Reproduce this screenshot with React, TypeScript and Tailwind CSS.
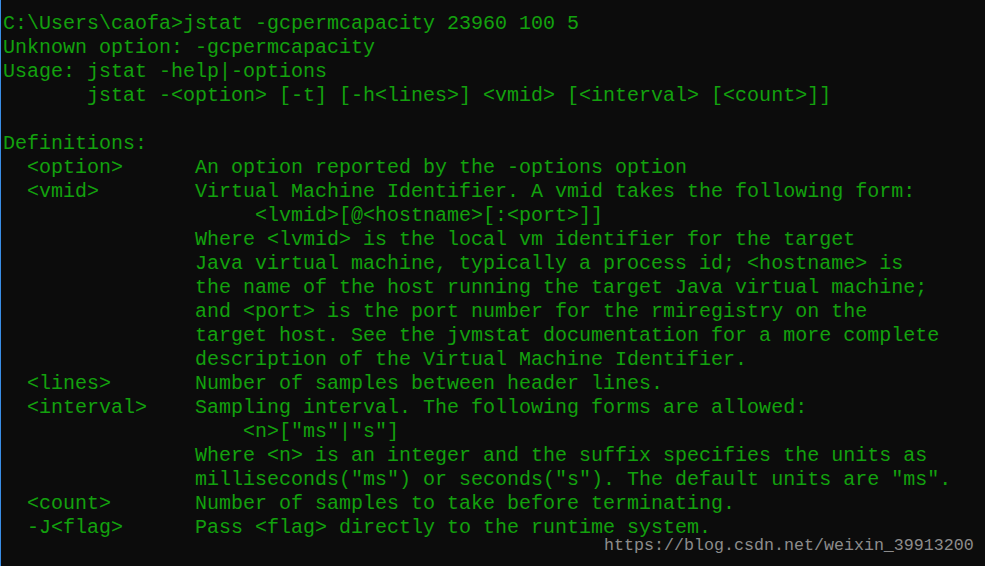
const lines = [
  "C:\\Users\\caofa>jstat -gcpermcapacity 23960 100 5",
  "Unknown option: -gcpermcapacity",
  "Usage: jstat -help|-options",
  "       jstat -<option> [-t] [-h<lines>] <vmid> [<interval> [<count>]]",
  "",
  "Definitions:",
  "  <option>      An option reported by the -options option",
  "  <vmid>        Virtual Machine Identifier. A vmid takes the following form:",
  "                     <lvmid>[@<hostname>[:<port>]]",
  "                Where <lvmid> is the local vm identifier for the target",
  "                Java virtual machine, typically a process id; <hostname> is",
  "                the name of the host running the target Java virtual machine;",
  "                and <port> is the port number for the rmiregistry on the",
  "                target host. See the jvmstat documentation for a more complete",
  "                description of the Virtual Machine Identifier.",
  "  <lines>       Number of samples between header lines.",
  "  <interval>    Sampling interval. The following forms are allowed:",
  "                    <n>[\"ms\"|\"s\"]",
  "                Where <n> is an integer and the suffix specifies the units as",
  "                milliseconds(\"ms\") or seconds(\"s\"). The default units are \"ms\".",
  "  <count>       Number of samples to take before terminating.",
  "  -J<flag>      Pass <flag> directly to the runtime system.",
  "",
  "C:\\Users\\caofa>",
];

const App = () => {
  return (
    <div className="relative h-[566px] w-[985px] overflow-hidden border-l border-[#3a8ee6] bg-[#0c0c0c]">
      <pre className="m-0 pl-[2px] pt-[12px] font-['Liberation_Mono',monospace] text-[20px] leading-[24px] text-[#13a10e] whitespace-pre">
        {lines.map((line, i) => (
          <div key={i} className="h-[24px]">
            {line}
          </div>
        ))}
      </pre>

      {/* CSDN watermark */}
      <div className="absolute left-[603px] top-[536px] font-['Liberation_Mono',monospace] text-[16.67px] leading-[20px] text-[#8c8c8c] whitespace-pre">
        https://blog.csdn.net/weixin_39913200
      </div>
    </div>
  );
};

export default App;
